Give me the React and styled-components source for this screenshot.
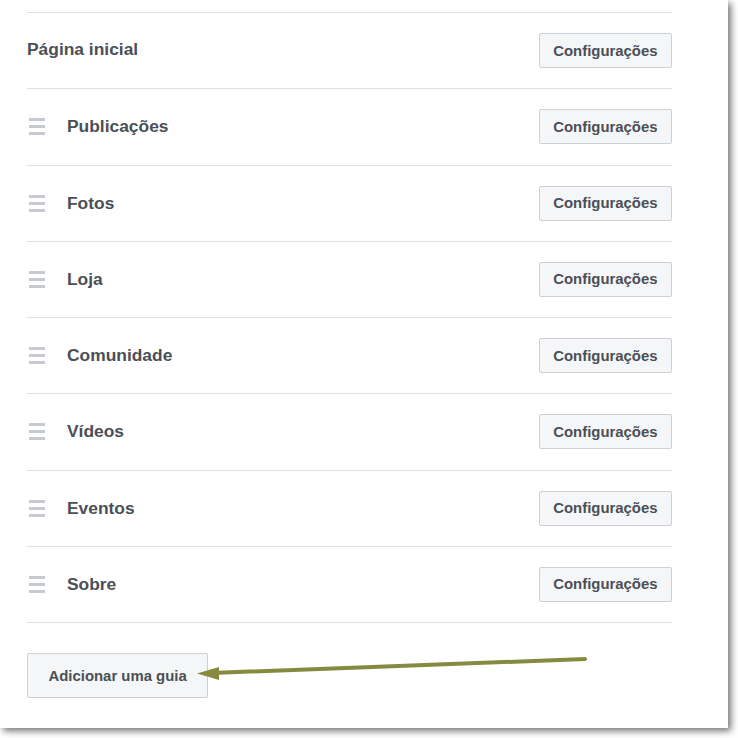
import React from 'react';
import styled, { createGlobalStyle } from 'styled-components';

const GlobalStyle = createGlobalStyle`
	html, body {
		margin: 0;
		padding: 0;
		background: #ffffff;
	}
	body {
		font-family: 'Liberation Sans', Arial, Helvetica, sans-serif;
		-webkit-font-smoothing: antialiased;
	}
`;

const Screen = styled.div`
	position: relative;
	width: 738px;
	height: 738px;
	overflow: hidden;
	background: #ffffff;
`;

const Card = styled.div`
	width: 728px;
	height: 728px;
	box-sizing: border-box;
	background: #ffffff;
	padding: 12px 56px 0 27px;
	box-shadow: 3px 3px 7px rgba(0, 0, 0, 0.55);
`;

const TabList = styled.ul`
	list-style: none;
	margin: 0;
	padding: 0;
	border-top: 1px solid #dddfe2;
`;

const TabRow = styled.li`
	display: flex;
	align-items: center;
	height: 75.25px;
	border-bottom: 1px solid #dddfe2;
`;

const Handle = styled.span`
	display: flex;
	flex-direction: column;
	gap: 4px;
	width: 16px;
	margin: 0 22px 0 2px;

	i {
		display: block;
		height: 3px;
		background: #c6cad0;
	}
`;

const TabName = styled.span`
	flex: 1;
	font-size: 17.4px;
	font-weight: bold;
	color: #4b4f56;
	padding-bottom: ${p => (p.home ? '2px' : '0')};
`;

const Button = styled.button`
	font-family: 'Liberation Sans', Arial, Helvetica, sans-serif;
	font-weight: bold;
	font-size: 14.9px;
	color: #4b4f56;
	background: #f5f6f7;
	border: 1px solid #ced0d4;
	border-radius: 2px;
	height: ${p => (p.big ? '45px' : '35px')};
	padding: 0 ${p => (p.big ? '20.5px' : '13.5px')};
	cursor: pointer;
`;

const Footer = styled.div`
	padding-top: 30px;
`;

const Arrow = styled.svg`
	position: absolute;
	left: 0;
	top: 0;
	pointer-events: none;
`;

const tabs = ['Publicações', 'Fotos', 'Loja', 'Comunidade', 'Vídeos', 'Eventos', 'Sobre'];

const App = () => {
	return (
		<Screen>
			<GlobalStyle />
			<Card>
				<TabList>
					<TabRow>
						<TabName home>Página inicial</TabName>
						<Button>Configurações</Button>
					</TabRow>
					{tabs.map(t => (
						<TabRow key={t}>
							<Handle><i /><i /><i /></Handle>
							<TabName>{t}</TabName>
							<Button>Configurações</Button>
						</TabRow>
					))}
				</TabList>
				<Footer>
					<Button big>Adicionar uma guia</Button>
				</Footer>
			</Card>
			{/* annotation arrow pointing at the add button */}
			<Arrow width="738" height="738" viewBox="0 0 738 738">
				<line x1="585" y1="659" x2="212" y2="673" stroke="#868a3f" strokeWidth="4" strokeLinecap="round" />
				<polygon points="197,673.5 219,667 219,680" fill="#868a3f" />
			</Arrow>
		</Screen>
	);
};

export default App;
